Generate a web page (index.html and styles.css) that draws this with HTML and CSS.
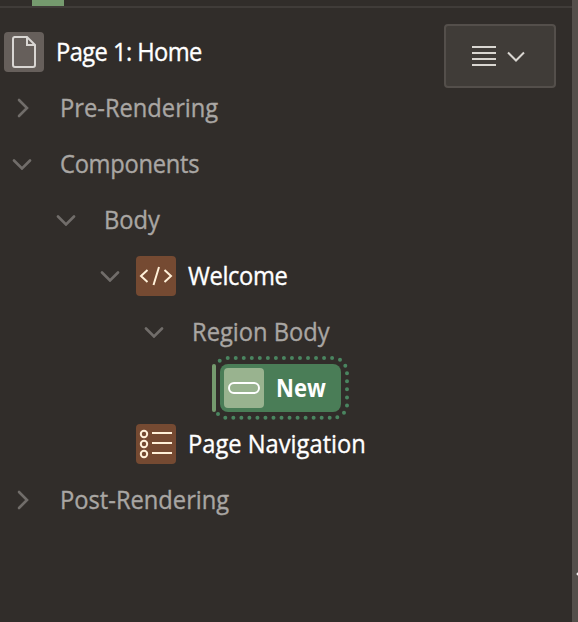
FILE: index.html
```html
<!DOCTYPE html>
<html lang="en">
<head>
<meta charset="utf-8">
<title>Page Designer</title>
<link rel="stylesheet" href="styles.css">
</head>
<body>
<svg class="defs" aria-hidden="true">
  <symbol id="down" viewBox="0 0 20 12"><path d="M2 2.500l8 8 8-8"/></symbol>
  <symbol id="right" viewBox="0 0 20 20"><path d="M7 2l8 8-8 8"/></symbol>
</svg>
<div class="app">
  <main class="panel">
    <div class="tabs"><div class="active-tab"></div></div>
    <button class="menu" aria-label="Menu">
      <svg width="24" height="20" viewBox="0 0 24 20"><path d="M0 1h24M0 7h24M0 13h24M0 19h24"/></svg>
      <svg width="20" height="12"><use href="#down"/></svg>
    </button>
    <ul class="tree">
      <li class="row root">
        <span class="icon page"><svg width="40" height="40" viewBox="0 0 40 40"><path d="M10 5h13l8 8v20q0 2-2 2H11q-2 0-2-2V7q0-2 2-2M23 5v8h8"/></svg></span>
        <span class="label t-page">Page 1: Home</span>
      </li>
      <li class="row group"><svg class="arrow" width="20" height="20"><use href="#right"/></svg><span class="label">Pre-Rendering</span></li>
      <li class="row group"><svg class="arrow" width="20" height="12"><use href="#down"/></svg><span class="label t-comp">Components</span></li>
      <li class="row group level-1"><svg class="arrow" width="20" height="12"><use href="#down"/></svg><span class="label">Body</span></li>
      <li class="row level-2"><svg class="arrow" width="20" height="12"><use href="#down"/></svg>
        <span class="icon region"><svg width="40" height="40" viewBox="0 0 40 40"><path d="M11.500 14L5 20l6.500 6M28.500 14l6.500 6-6.500 6M23 11l-5.500 18"/></svg></span>
        <span class="label t-welcome">Welcome</span></li>
      <li class="row group level-3"><svg class="arrow" width="20" height="12"><use href="#down"/></svg><span class="label">Region Body</span></li>
      <li class="row level-4">
        <div class="selected">
          <span class="icon button"><svg width="40" height="40" viewBox="0 0 40 40"><rect x="5" y="15" width="30" height="10" rx="5"/></svg></span>
          <span class="label t-new">New</span>
          <svg class="focus" width="140" height="66" viewBox="212 355 140 66"><path class="strip" d="M214 366V410"/><path class="dots" d="M227.700 358H333M225.300 417.700H330M347 373.300V406M219.700 360.700h.01M340 359.700h.01M345.300 365.700h.01M344 412.700h.01M337.300 417.300h.01M218 414h.01"/></svg>
        </div>
      </li>
      <li class="row leaf">
        <span class="icon region"><svg width="40" height="40" viewBox="0 0 40 40"><circle cx="8" cy="10" r="3.200"/><circle cx="8" cy="20" r="3.200"/><circle cx="8" cy="30" r="3.200"/><path d="M16 9h20M16 19h20M16 29h20"/></svg></span>
        <span class="label">Page Navigation</span></li>
      <li class="row group"><svg class="arrow" width="20" height="20"><use href="#right"/></svg><span class="label">Post-Rendering</span></li>
    </ul>
  </main>
  <div class="splitter"><svg width="6" height="8" viewBox="0 0 6 8"><path d="M6 2.500L4.800 4 6 5.500"/></svg></div>
</div>
</body>
</html>
```

FILE: styles.css
```css
* { box-sizing: border-box; }
body { margin: 0; background: #312d2a; font-family: "Open Sans", sans-serif; }
.defs { position: absolute; width: 0; height: 0; }
svg { display: block; flex: none; fill: none; stroke: currentColor; stroke-width: 2; }
.app { display: flex; width: 578px; height: 622px; overflow: hidden; }
.panel { position: relative; width: 572px; }
.splitter { width: 6px; background: #544f4b; padding-top: 570px; }
.splitter svg { fill: #fff; color: #fff; stroke-width: 1; }
.tabs { height: 8px; border-bottom: 2px solid #403c39; }
.active-tab { width: 32px; height: 6px; margin-left: 32px; background: #759a6e; }
.menu { position: absolute; top: 24px; left: 444px; width: 112px; height: 64px; display: flex; align-items: center; padding: 0 0 0 26px; gap: 10px; background: #403c38; border: 2px solid #544f4b; border-radius: 4px; color: #d9d6d1; }
.tree { list-style: none; margin: 0; padding: 16px 0 0; }
.row { display: flex; align-items: center; height: 56px; padding-left: 12px; color: #fff; }
.root { padding-left: 4px; }
.level-1 { padding-left: 56px; }
.level-2 { padding-left: 100px; }
.level-3 { padding-left: 144px; }
.level-4 { padding-left: 220px; }
.leaf { padding-left: 136px; }
.arrow { color: #716d6a; stroke-width: 2.6; stroke-linecap: round; }
.group .label { margin-left: 28px; color: #a9a6a3; }
.icon { width: 40px; height: 40px; flex: none; border-radius: 4px; }
.level-2 .icon { margin-left: 16px; }
.page { background: #665f5b; color: #d9d6d3; }
.region { background: #754a32; color: #fff0d8; }
.button { background: #99b38f; color: #fff; }
.label { margin-left: 12px; padding-bottom: 2px; font-size: 25px; line-height: 34px; white-space: nowrap; transform: scaleX(.948); transform-origin: left center; -webkit-text-stroke: .35px currentColor; }
.selected { position: relative; display: flex; align-items: center; width: 121px; height: 48px; padding-left: 4px; border-radius: 8px; background: #4a7d57; }
.t-page { letter-spacing: -.6px; }
.t-comp { letter-spacing: -.3px; }
.t-welcome { letter-spacing: -.4px; }
.t-new { font-weight: 700; transform: scaleX(.88); -webkit-text-stroke: 0; }
.focus { position: absolute; left: -8px; top: -9px; }
.strip { stroke: #759a6e; stroke-width: 4; stroke-linecap: round; }
.dots { stroke: #4a8560; stroke-width: 4; stroke-linecap: round; stroke-dasharray: 0 8.03; }
```
